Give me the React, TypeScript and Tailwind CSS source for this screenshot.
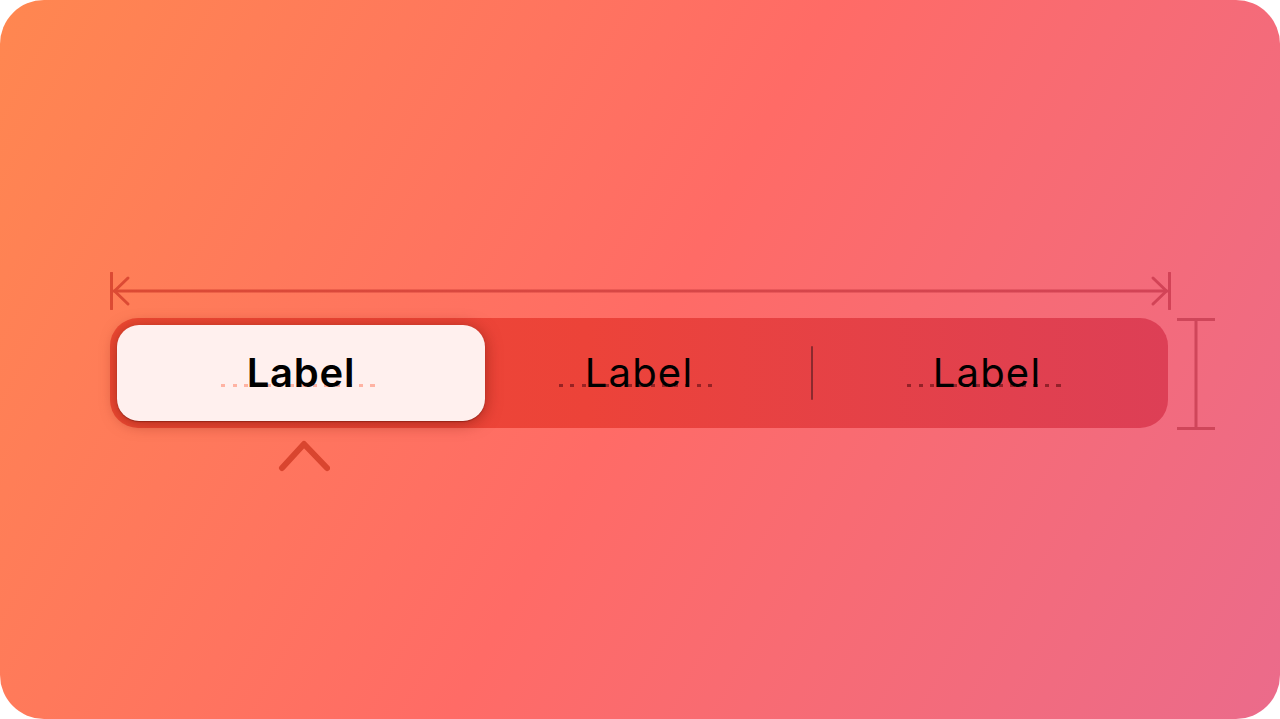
import React from 'react';

const font = { fontFamily: 'Inter, "Noto Sans", sans-serif' };

function Dots({ selected }: { selected?: boolean }) {
  return (
    <div
      className={
        selected
          ? 'absolute left-1/2 top-[31px] h-[3px] w-[160px] -translate-x-1/2 bg-[repeating-linear-gradient(90deg,#ffb3a3_0_4px,transparent_4px_11.5px)]'
          : 'absolute left-1/2 top-[31px] h-[3px] w-[160px] -translate-x-1/2 bg-[repeating-linear-gradient(90deg,rgba(115,20,25,0.7)_0_4px,transparent_4px_11.5px)]'
      }
    />
  );
}

function WidthArrow() {
  return (
    <svg width="1062" height="38" viewBox="0 0 1062 38" fill="none">
      <defs>
        <linearGradient id="arr" gradientUnits="userSpaceOnUse" x1="0" y1="0" x2="1062" y2="0">
          <stop offset="0" stopColor="#dc4a33" />
          <stop offset="1" stopColor="#d24357" />
        </linearGradient>
      </defs>
      <g stroke="url(#arr)" strokeWidth="3" strokeLinecap="round" strokeLinejoin="round">
        <line x1="1.5" y1="1" x2="1.5" y2="37" />
        <line x1="1059.5" y1="1" x2="1059.5" y2="37" />
        <line x1="4" y1="19" x2="1057" y2="19" />
        <polyline points="18,6 4.5,19 18,32" />
        <polyline points="1043,6 1056.5,19 1043,32" />
      </g>
    </svg>
  );
}

function HeightBeam() {
  return (
    <svg width="38" height="112" viewBox="0 0 38 112" fill="none">
      <g stroke="#cf465a" strokeWidth="3">
        <line x1="0" y1="1.5" x2="38" y2="1.5" />
        <line x1="19" y1="1.5" x2="19" y2="110.5" />
        <line x1="0" y1="110.5" x2="38" y2="110.5" />
      </g>
    </svg>
  );
}

export default function App() {
  return (
    <div className="w-[1280px] h-[719px] bg-white" style={font}>
      <div className="h-full w-full rounded-[44px] bg-[linear-gradient(118deg,#ff8750_0%,#ff6b66_50%,#eb6b8b_100%)] pt-[272px] pl-[110px]">
        <WidthArrow />

        <div className="mt-[8px] flex items-start">
          <div className="flex h-[110px] w-[1058px] items-center rounded-[28px] bg-[linear-gradient(90deg,#ef4a33,#ec4339_45%,#dd3f56)] p-[7px]">
            <div className="relative flex h-[96px] w-[368px] items-center justify-center rounded-[22px] bg-[#fff0ee] shadow-[0_2px_16px_rgba(110,20,10,0.55),0_1px_1px_rgba(110,20,10,0.5)]">
              <div className="relative">
                <Dots selected />
                <span className="relative text-[40px] font-semibold leading-none tracking-[0.8px] text-black">
                  Label
                </span>
              </div>
            </div>

            <div className="flex h-full w-[308px] items-center justify-center">
              <div className="relative">
                <Dots />
                <span className="relative text-[40px] font-normal leading-none tracking-[1.2px] text-black">
                  Label
                </span>
              </div>
            </div>

            <div className="ml-[18px] h-[54px] w-[2px] rounded-full bg-[#8c2a2e]" />

            <div className="flex h-full flex-1 items-center justify-center">
              <div className="relative">
                <Dots />
                <span className="relative text-[40px] font-normal leading-none tracking-[1.2px] text-black">
                  Label
                </span>
              </div>
            </div>
          </div>

          <div className="ml-[9px]">
            <HeightBeam />
          </div>
        </div>

        <svg className="ml-[168px] mt-[9px]" width="52" height="34" viewBox="0 0 52 34" fill="none">
          <polyline
            points="4,29 26,5 49,29"
            stroke="#d9452f"
            strokeWidth="6"
            strokeLinecap="round"
            strokeLinejoin="round"
          />
        </svg>
      </div>
    </div>
  );
}
